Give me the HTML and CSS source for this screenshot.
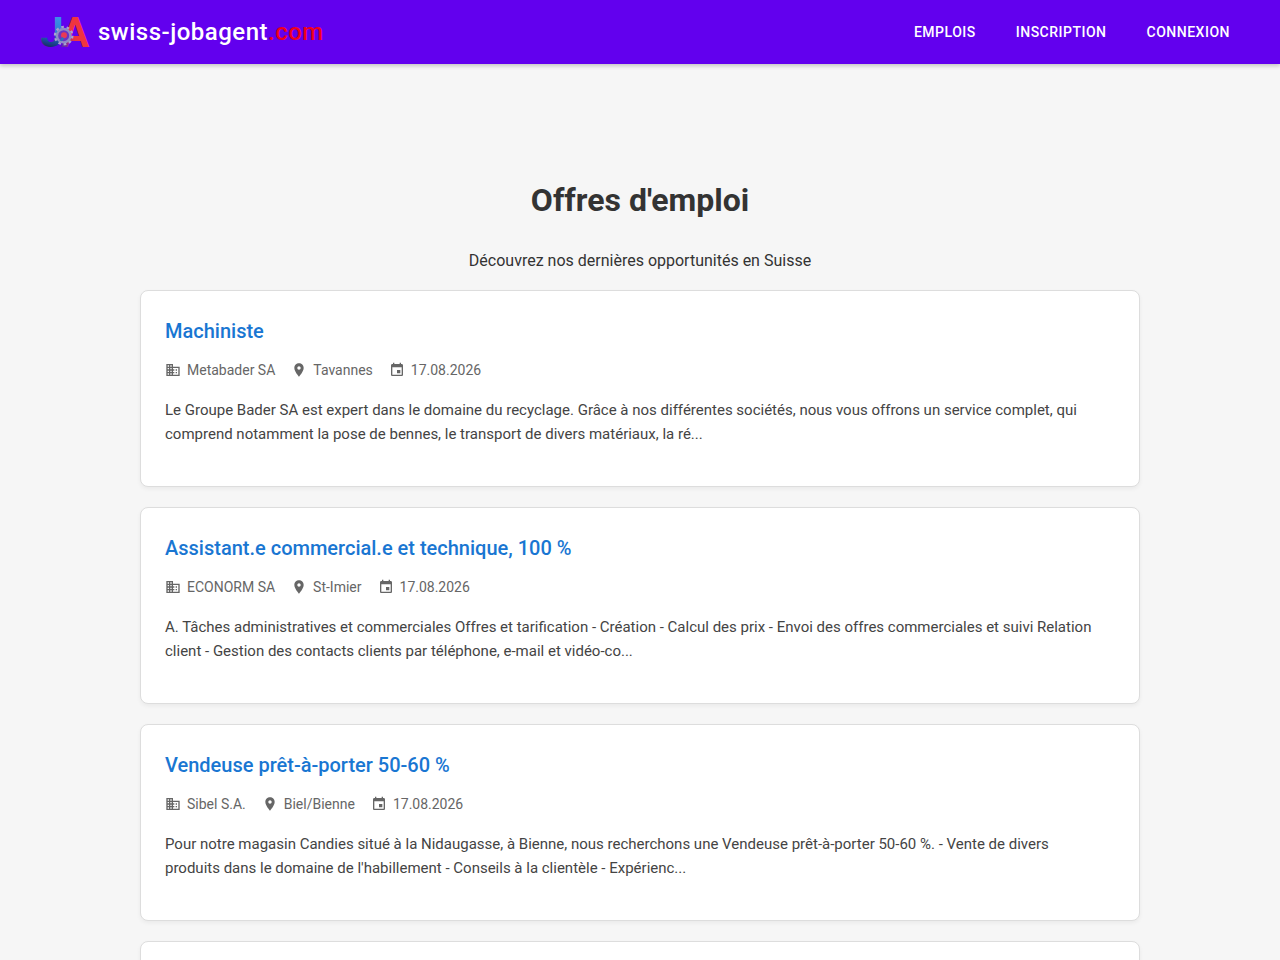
FILE: index.html
```html
<!DOCTYPE html>
<html lang="fr">
<head>
  <meta charset="UTF-8" />
  <title>Offres d'emploi</title>
  <meta name="viewport" content="width=device-width, initial-scale=1.0"/>
  <link rel="stylesheet" href="styles.css">
</head>
<body>

  <!-- shared icons -->
  <svg class="sprite" aria-hidden="true">
    <symbol id="icon-business" viewBox="0 0 24 24">
      <path d="M12 7V3H2v18h20V7H12zM6 19H4v-2h2v2zm0-4H4v-2h2v2zm0-4H4V9h2v2zm0-4H4V5h2v2zm4 12H8v-2h2v2zm0-4H8v-2h2v2zm0-4H8V9h2v2zm0-4H8V5h2v2zm10 12h-8v-2h2v-2h-2v-2h2v-2h-2V9h8v10zm-2-8h-2v2h2v-2zm0 4h-2v2h2v-2z"/>
    </symbol>
    <symbol id="icon-location" viewBox="0 0 24 24">
      <path d="M12 2C8.13 2 5 5.13 5 9c0 5.25 7 13 7 13s7-7.75 7-13c0-3.87-3.13-7-7-7zm0 9.500c-1.380 0-2.500-1.120-2.500-2.500s1.120-2.500 2.500-2.500 2.500 1.120 2.500 2.500-1.120 2.500-2.500 2.500z"/>
    </symbol>
    <symbol id="icon-event" viewBox="0 0 24 24">
      <path d="M17 12h-5v5h5v-5zM16 1v2H8V1H6v2H5c-1.110 0-1.990.9-1.990 2L3 19c0 1.100.890 2 2 2h14c1.100 0 2-.9 2-2V5c0-1.100-.9-2-2-2h-1V1h-2zm3 18H5V8h14v11z"/>
    </symbol>
  </svg>

  <header>
    <a class="brand" href="#">
      <svg class="logo" viewBox="12 18 150 102" aria-hidden="true">
        <defs>
          <linearGradient id="j-fill" gradientUnits="userSpaceOnUse" x1="60" y1="26" x2="40" y2="115">
            <stop offset="0" stop-color="#3b8fe8"/>
            <stop offset="0.5" stop-color="#2b7fd0"/>
            <stop offset="0.8" stop-color="#1b4a98"/>
            <stop offset="1" stop-color="#152a66"/>
          </linearGradient>
          <linearGradient id="a-fill" gradientUnits="userSpaceOnUse" x1="82" y1="110" x2="118" y2="90">
            <stop offset="0" stop-color="#5b2bb0"/>
            <stop offset="0.6" stop-color="#c0305f"/>
            <stop offset="1" stop-color="#f0343f"/>
          </linearGradient>
        </defs>
        <text class="logo-letter" x="13" y="115" fill="url(#j-fill)">J</text>
        <text class="logo-letter" x="75" y="115" fill="url(#a-fill)">A</text>
        <circle cx="83" cy="80" r="20" fill="#6a35c4"/>
        <circle cx="83" cy="80" r="26" fill="none" stroke="#a9a3cf" stroke-width="7" stroke-dasharray="8 8.330"/>
        <circle cx="83" cy="80" r="20" fill="none" stroke="#8f8cc6" stroke-width="7"/>
        <circle cx="84" cy="79" r="9" fill="#e83a55"/>
        <path d="M70 94l10-10 5 5-8 8z" fill="#2b72bd"/>
      </svg>
      <span>swiss-jobagent<span class="tld">.com</span></span>
    </a>
    <nav>
      <a href="#">Emplois</a>
      <a href="#">Inscription</a>
      <a href="#">Connexion</a>
    </nav>
  </header>

  <main>
    <h1>Offres d'emploi</h1>
    <p class="intro">Découvrez nos dernières opportunités en Suisse</p>

    <div class="job-list">
      <article class="job-card">
        <h2><a href="#">Machiniste</a></h2>
        <div class="job-meta">
          <span><svg><use href="#icon-business"/></svg>Metabader SA</span>
          <span><svg><use href="#icon-location"/></svg>Tavannes</span>
          <span><svg><use href="#icon-event"/></svg>17.08.2026</span>
        </div>
        <p>Le Groupe Bader SA est expert dans le domaine du recyclage. Grâce à nos différentes sociétés, nous vous offrons un service complet, qui comprend notamment la pose de bennes, le transport de divers matériaux, la ré...</p>
      </article>

      <article class="job-card">
        <h2><a href="#">Assistant.e commercial.e et technique, 100 %</a></h2>
        <div class="job-meta">
          <span><svg><use href="#icon-business"/></svg>ECONORM SA</span>
          <span><svg><use href="#icon-location"/></svg>St-Imier</span>
          <span><svg><use href="#icon-event"/></svg>17.08.2026</span>
        </div>
        <p>A. Tâches administratives et commerciales Offres et tarification - Création - Calcul des prix - Envoi des offres commerciales et suivi Relation client - Gestion des contacts clients par téléphone, e-mail et vidéo-co...</p>
      </article>

      <article class="job-card">
        <h2><a href="#">Vendeuse prêt-à-porter 50-60 %</a></h2>
        <div class="job-meta">
          <span><svg><use href="#icon-business"/></svg>Sibel S.A.</span>
          <span><svg><use href="#icon-location"/></svg>Biel/Bienne</span>
          <span><svg><use href="#icon-event"/></svg>17.08.2026</span>
        </div>
        <p>Pour notre magasin Candies situé à la Nidaugasse, à Bienne, nous recherchons une Vendeuse prêt-à-porter 50-60 %. - Vente de divers produits dans le domaine de l'habillement - Conseils à la clientèle - Expérienc...</p>
      </article>

      <article class="job-card"></article>
    </div>
  </main>

</body>
</html>
```
FILE: styles.css
```css
body {
  font-family: Roboto, Arial, sans-serif;
  background: #f6f6f6;
  color: #333;
  margin: 0;
}

a {
  text-decoration: none;
}

.sprite {
  display: none;
}

header {
  display: flex;
  align-items: center;
  justify-content: space-between;
  height: 64px;
  padding: 0 50px 0 40px;
  background-color: #6200ee;
  box-shadow: 0 2px 4px rgba(0, 0, 0, 0.2);
}

.brand {
  display: flex;
  align-items: center;
  gap: 8px;
  color: white;
  font-size: 24px;
  font-weight: 500;
  letter-spacing: 0.5px;
}

.logo {
  width: 50px;
  height: 34px;
  overflow: visible;
}

.logo-letter {
  font-size: 126px;
  font-weight: bold;
  letter-spacing: 0;
}

.tld {
  color: #f0001c;
}

nav {
  display: flex;
  gap: 40px;
}

nav a {
  color: white;
  font-size: 14px;
  font-weight: 500;
  letter-spacing: 0.5px;
  text-transform: uppercase;
}

nav a:hover {
  text-decoration: underline;
}

main {
  max-width: 1000px;
  margin: 0 auto;
  padding: 116px 20px 20px;
}

h1 {
  margin: 0 0 28px;
  font-size: 32px;
  line-height: 40px;
  text-align: center;
}

.intro {
  margin: 0 0 16px;
  font-size: 16px;
  line-height: 26px;
  text-align: center;
}

.job-list {
  display: flex;
  flex-direction: column;
  gap: 20px;
}

.job-card {
  min-height: 147px;
  padding: 24px;
  background: white;
  border: 1px solid #ddd;
  border-radius: 8px;
  box-shadow: 0 2px 4px rgba(0, 0, 0, 0.05);
}

.job-card h2 {
  margin: 0 0 11px;
  font-size: 20px;
  font-weight: 500;
  line-height: 32px;
}

.job-card h2 a {
  color: #1976d2;
}

.job-card h2 a:hover {
  text-decoration: underline;
}

.job-meta {
  display: flex;
  flex-wrap: wrap;
  gap: 16px;
  margin-bottom: 16px;
  color: #666;
  font-size: 14px;
  line-height: 24px;
}

.job-meta span {
  display: flex;
  align-items: center;
  gap: 6px;
}

.job-meta svg {
  width: 16px;
  height: 16px;
  fill: #666;
}

.job-card p {
  margin: 0 0 16px;
  padding-right: 16px;
  color: #444;
  font-size: 15px;
  line-height: 24px;
}

@media (max-width: 600px) {
  header {
    padding: 0 16px;
  }

  nav {
    gap: 16px;
  }

  main {
    padding-top: 40px;
  }
}
```
